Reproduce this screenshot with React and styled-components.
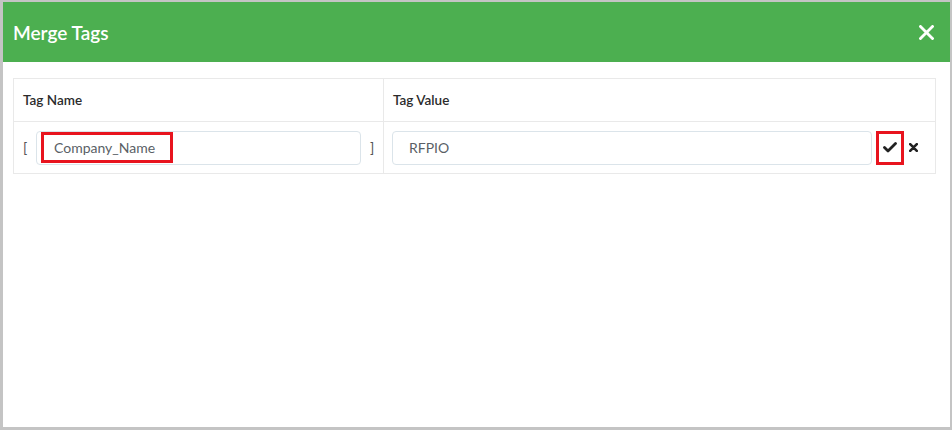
import React from "react";
import styled, { createGlobalStyle } from "styled-components";

const Global = createGlobalStyle`
  html, body { margin: 0; padding: 0; background: #fff; }
  body { font-family: "Lato", "Noto Sans", sans-serif; }
  * { box-sizing: border-box; }
`;

const Frame = styled.div`
  width: 952px;
  height: 430px;
  border-style: solid;
  border-color: #c4c4c4;
  border-width: 2px 2px 3px 3px;
  display: flex;
  flex-direction: column;
  background: #fff;
`;

const Header = styled.div`
  height: 60px;
  flex: none;
  background: #4caf50;
  display: flex;
  align-items: center;
  justify-content: space-between;
  padding: 0 15px 0 10px;
`;

const Title = styled.h1`
  margin: 0;
  color: #fff;
  font-family: "Lato", "Noto Sans", sans-serif;
  font-weight: 600;
  font-size: 19px;
`;

const CloseButton = styled.button`
  border: 0;
  background: transparent;
  padding: 0;
  width: 18px;
  height: 18px;
  display: flex;
  align-items: center;
  justify-content: center;
  cursor: pointer;
`;

const Body = styled.div`
  flex: 1;
  padding: 16px 14px 0 10px;
`;

const Table = styled.div`
  border: 1px solid #e9e9e9;
  display: grid;
  grid-template-columns: 369px 1fr;
`;

const HeadCell = styled.div`
  height: 43px;
  display: flex;
  align-items: center;
  padding-left: 9px;
  font-size: 13.5px;
  font-weight: 600;
  color: #2b2b2b;
  border-bottom: 1px solid #e9e9e9;
  border-left: ${(p) => (p.$divider ? "1px solid #e9e9e9" : "0")};
`;

const Cell = styled.div`
  height: 51px;
  display: flex;
  align-items: center;
  padding: 0 0 0 ${(p) => p.$pl}px;
  border-left: ${(p) => (p.$divider ? "1px solid #e9e9e9" : "0")};
`;

const Bracket = styled.span`
  font-size: 14px;
  color: #555;
  width: ${(p) => p.$w}px;
  margin-left: ${(p) => p.$ml || 0}px;
  flex: none;
`;

const InputWrap = styled.div`
  position: relative;
  width: ${(p) => p.$w}px;
  flex: none;
`;

const Input = styled.div`
  height: 34px;
  border: 1px solid #dbe4ea;
  border-radius: 4px;
  display: flex;
  align-items: center;
  padding-left: ${(p) => p.$pl}px;
  font-size: 14px;
  color: #5a5f66;
`;

const Highlight = styled.div`
  position: absolute;
  left: 5px;
  top: 1px;
  width: 132px;
  height: 31px;
  border: 3px solid #e8141e;
  pointer-events: none;
`;

const IconButton = styled.button`
  flex: none;
  width: ${(p) => p.$w}px;
  height: ${(p) => p.$h}px;
  margin-left: ${(p) => p.$ml}px;
  padding: 0;
  background: transparent;
  border: ${(p) => (p.$marked ? "3px solid #e8141e" : "0")};
  display: flex;
  align-items: center;
  justify-content: center;
  cursor: pointer;
`;

export default function App() {
  return (
    <>
      <Global />
      <Frame>
        <Header>
          <Title>Merge Tags</Title>
          <CloseButton aria-label="close">
            <svg width="15" height="15" viewBox="0 0 15 15">
              <path d="M1.5 1.5 L13.5 13.5 M13.5 1.5 L1.5 13.5" stroke="#fff" strokeWidth="2.8" strokeLinecap="square" />
            </svg>
          </CloseButton>
        </Header>
        <Body>
          <Table>
            <HeadCell>Tag Name</HeadCell>
            <HeadCell $divider>Tag Value</HeadCell>
            <Cell $pl={9}>
              <Bracket $w={13}>[</Bracket>
              <InputWrap $w={325}>
                <Input $pl={17}>Company_Name</Input>
                <Highlight />
              </InputWrap>
              <Bracket $w={12} $ml={9}>]</Bracket>
            </Cell>
            <Cell $divider $pl={8}>
              <InputWrap $w={480}>
                <Input $pl={16}>RFPIO</Input>
              </InputWrap>
              <IconButton $marked $w={28} $h={34} $ml={4} aria-label="save">
                <svg width="14" height="11" viewBox="0 0 14 11">
                  <path d="M1.5 5.5 L5 9 L12.5 1.5" fill="none" stroke="#222" strokeWidth="2.8" strokeLinecap="round" strokeLinejoin="round" />
                </svg>
              </IconButton>
              <IconButton $w={10} $h={10} $ml={4} aria-label="cancel">
                <svg width="9" height="9" viewBox="0 0 9 9">
                  <path d="M1.2 1.2 L7.8 7.8 M7.8 1.2 L1.2 7.8" stroke="#222" strokeWidth="2.6" strokeLinecap="round" />
                </svg>
              </IconButton>
            </Cell>
          </Table>
        </Body>
      </Frame>
    </>
  );
}
